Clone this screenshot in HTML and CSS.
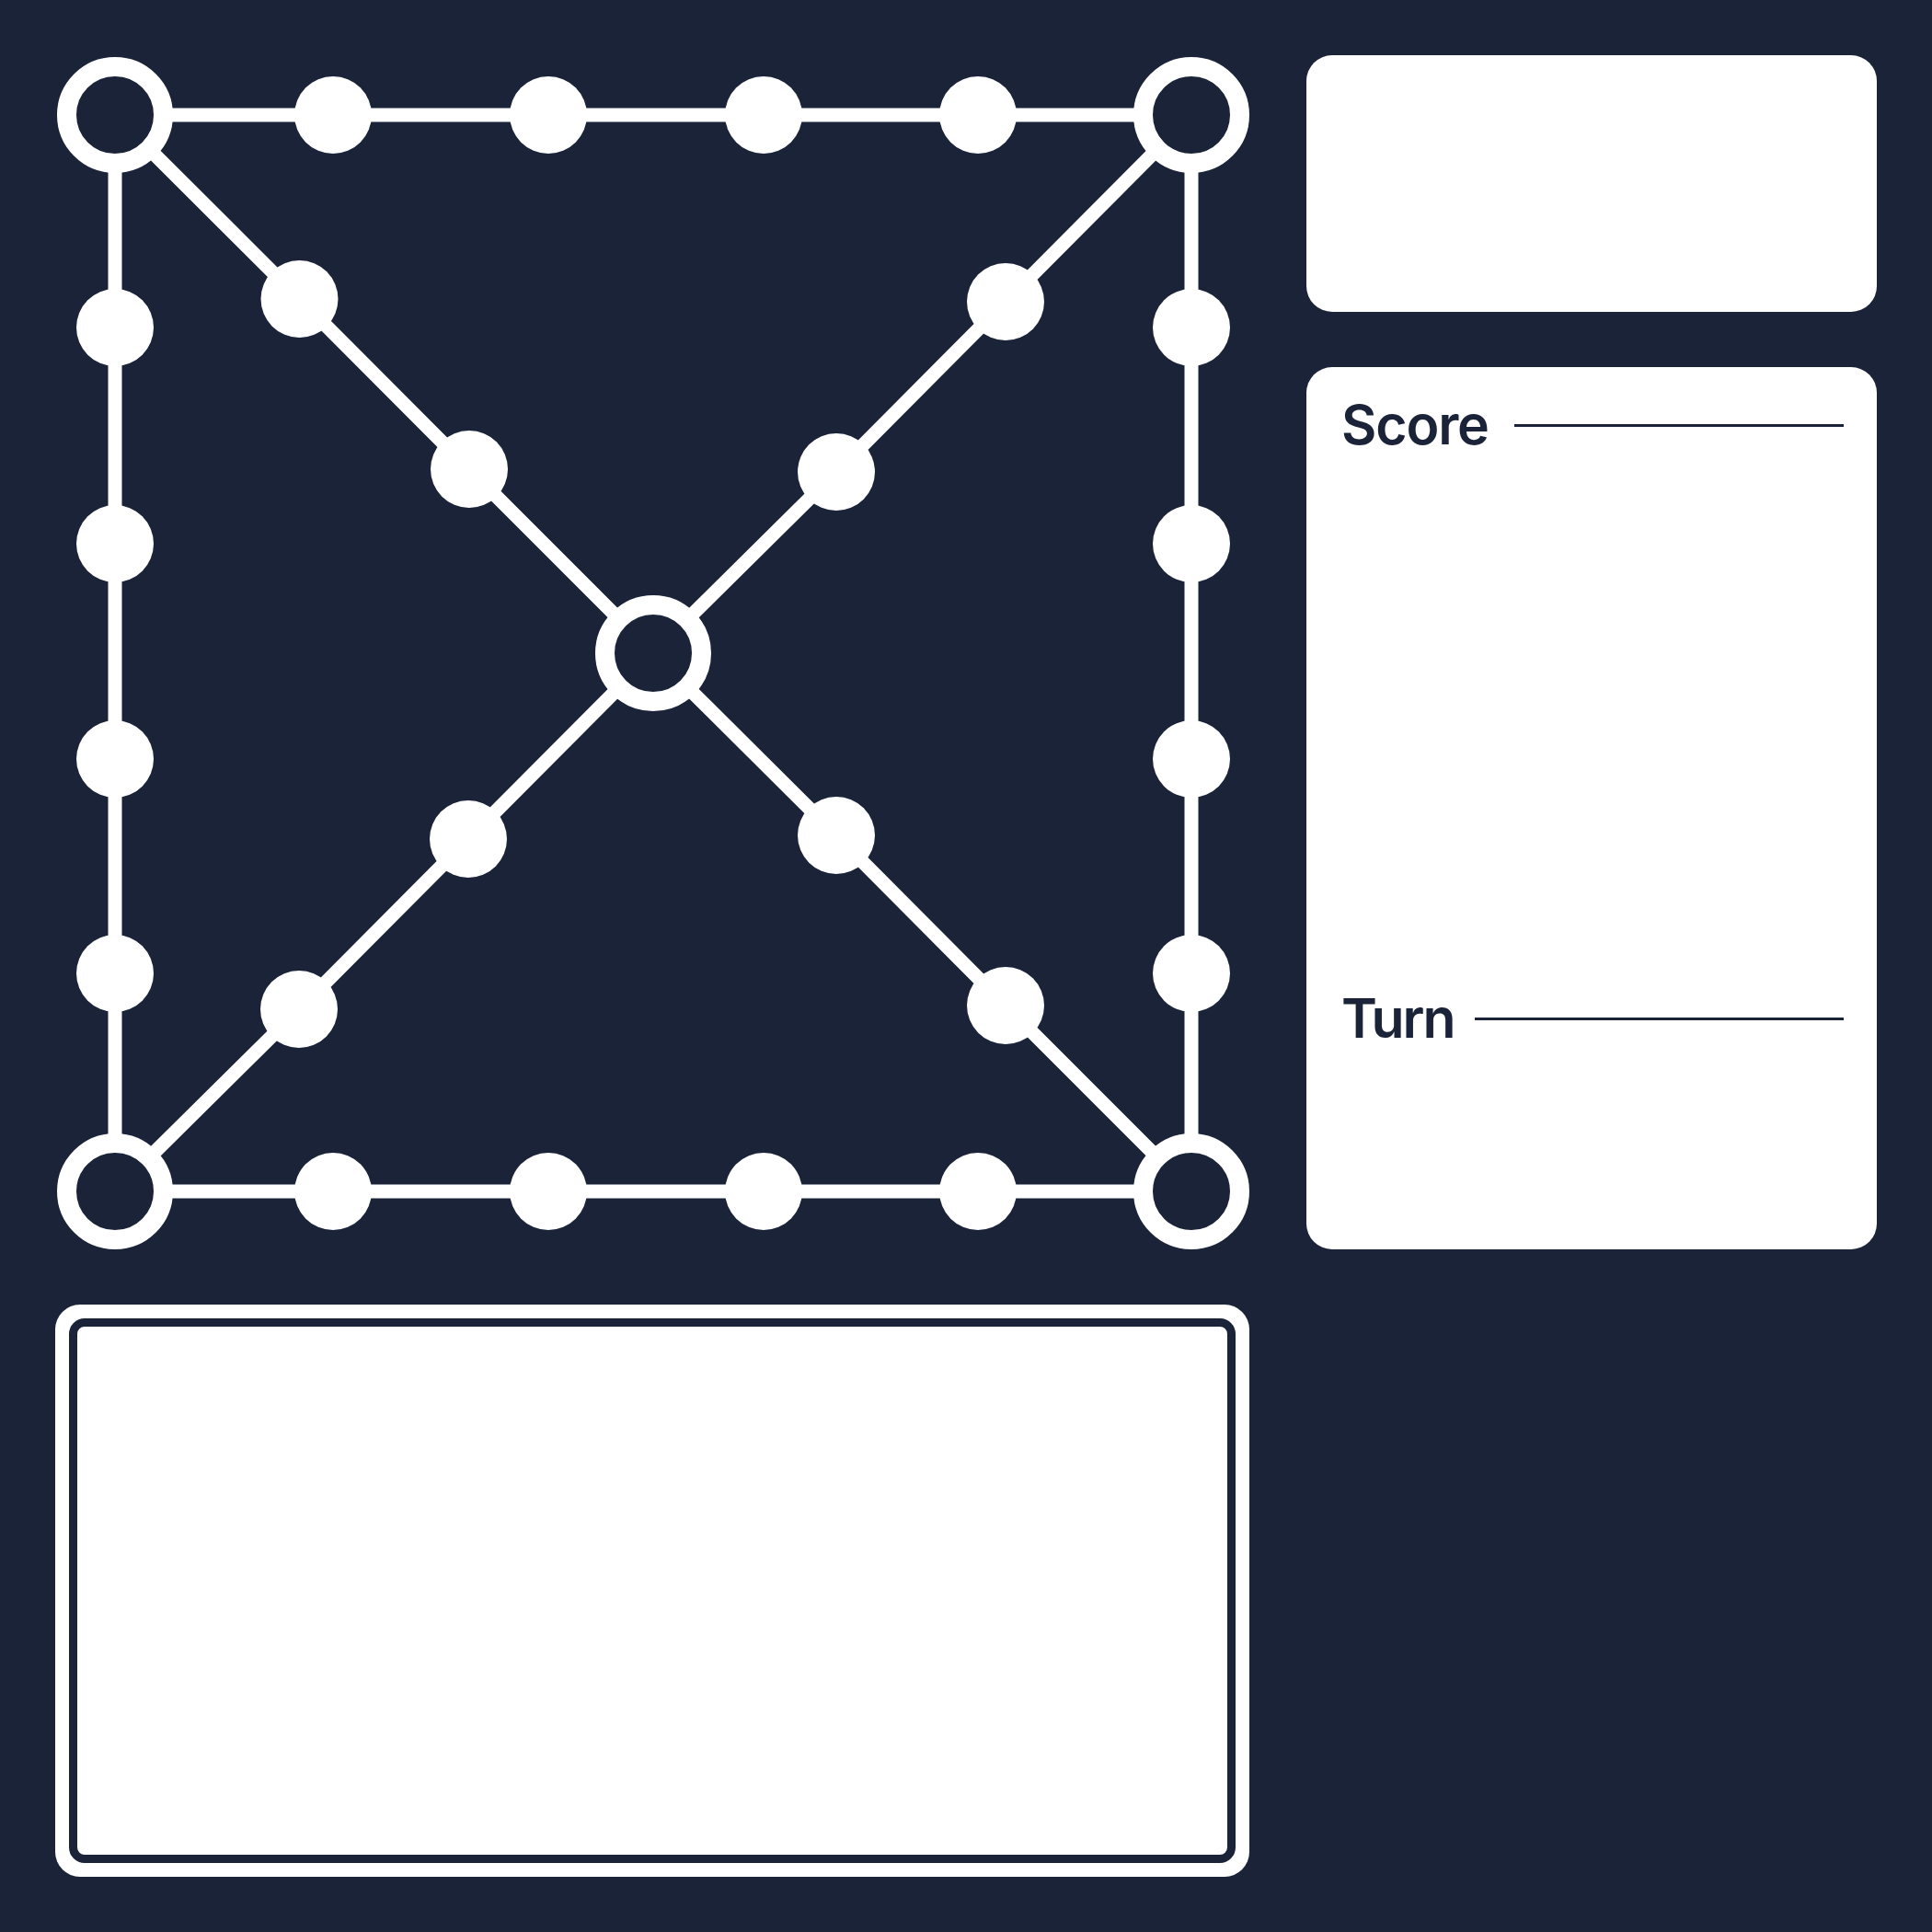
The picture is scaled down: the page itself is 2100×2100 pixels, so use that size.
FILE: index.html
```html
<!DOCTYPE html>
<html lang="en">
<head>
    <meta charset="UTF-8">
    <meta name="viewport" content="width=device-width, initial-scale=1.0">
    <title>Board</title>
    <link rel="stylesheet" href="styles.css">
</head>
<body>
    <div class="layout">
        <div class="board">
            <svg class="board-svg" viewBox="0 0 1298 1298" width="1298" height="1298">
                <g class="lines">
                    <!-- outer square -->
                    <line x1="65" y1="65" x2="1235" y2="65"/>
                    <line x1="65" y1="1235" x2="1235" y2="1235"/>
                    <line x1="65" y1="65" x2="65" y2="1235"/>
                    <line x1="1235" y1="65" x2="1235" y2="1235"/>
                    <!-- diagonals -->
                    <polyline points="65,65 265.5,265 450,450 650,650 849,848 1033,1033 1235,1235"/>
                    <polyline points="1235,65 1033,268 849,453 650,650 449,852 265,1037 65,1235"/>
                </g>
                <g class="dots">
                    <circle cx="302" cy="65" r="42"/>
                    <circle cx="536" cy="65" r="42"/>
                    <circle cx="770" cy="65" r="42"/>
                    <circle cx="1003" cy="65" r="42"/>

                    <circle cx="302" cy="1235" r="42"/>
                    <circle cx="536" cy="1235" r="42"/>
                    <circle cx="770" cy="1235" r="42"/>
                    <circle cx="1003" cy="1235" r="42"/>

                    <circle cx="65" cy="296" r="42"/>
                    <circle cx="65" cy="531" r="42"/>
                    <circle cx="65" cy="765" r="42"/>
                    <circle cx="65" cy="998" r="42"/>

                    <circle cx="1235" cy="296" r="42"/>
                    <circle cx="1235" cy="531" r="42"/>
                    <circle cx="1235" cy="765" r="42"/>
                    <circle cx="1235" cy="998" r="42"/>

                    <circle cx="265.5" cy="265" r="42"/>
                    <circle cx="450" cy="450" r="42"/>
                    <circle cx="1033" cy="268" r="42"/>
                    <circle cx="849" cy="453" r="42"/>
                    <circle cx="265" cy="1037" r="42"/>
                    <circle cx="449" cy="852" r="42"/>
                    <circle cx="849" cy="848" r="42"/>
                    <circle cx="1033" cy="1033" r="42"/>
                </g>
                <g class="rings">
                    <circle cx="65" cy="65" r="52.5"/>
                    <circle cx="1235" cy="65" r="52.5"/>
                    <circle cx="65" cy="1235" r="52.5"/>
                    <circle cx="1235" cy="1235" r="52.5"/>
                    <circle cx="650" cy="650" r="52.5"/>
                </g>
            </svg>
        </div>

        <div class="side">
            <div class="card status-card"></div>

            <div class="card score-card">
                <div class="label-row">
                    <span class="label">Score</span>
                    <span class="rule"></span>
                </div>
                <div class="score-list"></div>
                <div class="label-row turn-row">
                    <span class="label">Turn</span>
                    <span class="rule"></span>
                </div>
            </div>
        </div>

        <div class="log-panel">
            <div class="log-inner"></div>
        </div>
    </div>
</body>
</html>
```

FILE: styles.css
```css
:root {
    --navy: #1a2338;
    --white: #ffffff;
}

* {
    margin: 0;
    padding: 0;
    box-sizing: border-box;
}

body {
    background: var(--navy);
    color: var(--navy);
    font-family: 'Inter', 'Liberation Sans', sans-serif;
    min-height: 100vh;
}

.layout {
    display: grid;
    grid-template-columns: 1298px 620px;
    grid-template-rows: 1298px 622px;
    column-gap: 62px;
    row-gap: 60px;
    padding: 60px;
}

.board-svg {
    display: block;
}

.lines line,
.lines polyline {
    stroke: var(--white);
    stroke-width: 15;
    fill: none;
}

.dots circle {
    fill: var(--white);
}

.rings circle {
    fill: var(--navy);
    stroke: var(--white);
    stroke-width: 21;
}

.side {
    display: flex;
    flex-direction: column;
    gap: 60px;
}

.card {
    background: var(--white);
    border-radius: 28px;
}

.status-card {
    height: 279px;
}

.score-card {
    flex: 1;
    padding: 33px 36px 0 38px;
}

.label-row {
    display: flex;
    align-items: center;
    gap: 28px;
    height: 60px;
}

.turn-row {
    gap: 22px;
}

.label {
    font-size: 59px;
    line-height: 60px;
    font-weight: 600;
    letter-spacing: -0.02em;
}

.turn-row .label {
    letter-spacing: -0.035em;
}

.rule {
    flex: 1;
    height: 3px;
    background: var(--navy);
}

.score-list {
    height: 585px;
}

.log-panel {
    background: var(--white);
    border-radius: 27px;
    padding: 15px;
}

.log-inner {
    height: 100%;
    border: 9px solid var(--navy);
    border-radius: 17px;
    background: var(--white);
}
```
